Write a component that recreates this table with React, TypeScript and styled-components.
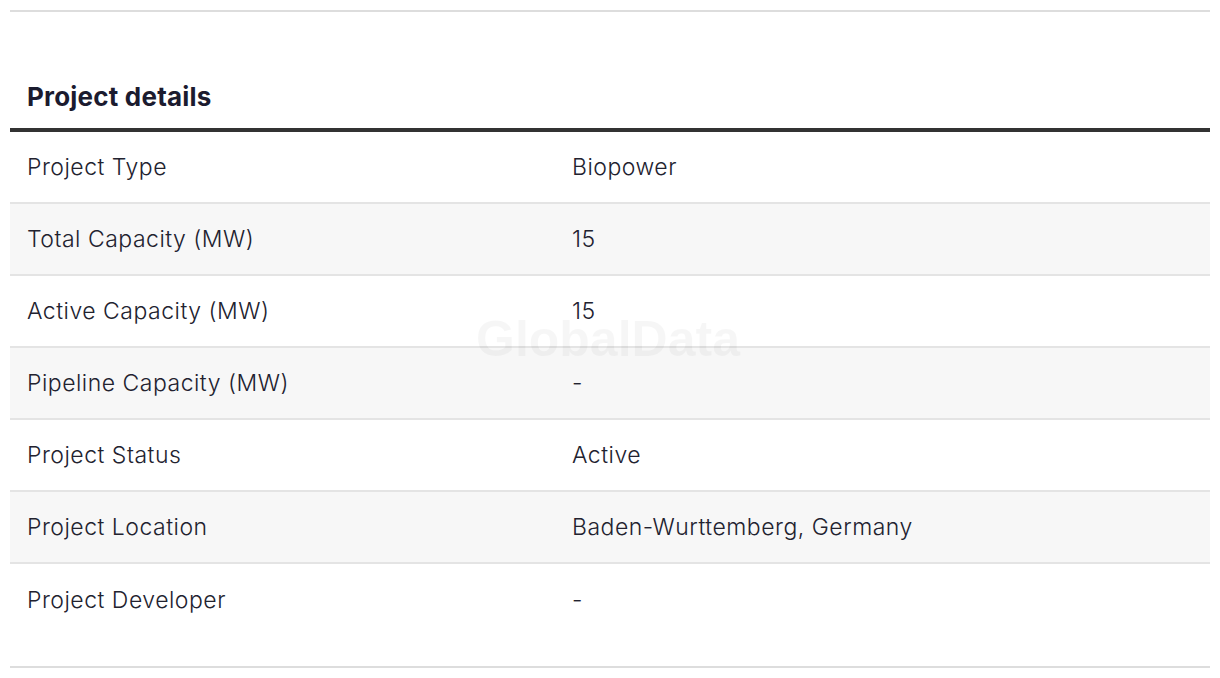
import React from "react";
import styled, { createGlobalStyle } from "styled-components";

const Global = createGlobalStyle`
  html, body { margin: 0; padding: 0; background: #fff; }
  body { font-family: Inter, "Noto Sans", "Liberation Sans", sans-serif; }
`;

const Page = styled.div`
  padding: 10px;
`;

const Rule = styled.div`
  height: 2px;
  background: #dddddd;
`;

const Heading = styled.h2`
  margin: 0;
  padding: 69px 17px 15px;
  font-size: 26px;
  line-height: 32px;
  font-weight: 700;
  color: #1b1b2f;
  border-bottom: 4px solid #333333;
  letter-spacing: 0.2px;
`;

const Table = styled.div`
  position: relative;
  display: flex;
  flex-direction: column;
`;

const Row = styled.div<{ $shaded: boolean; $last: boolean }>`
  display: grid;
  grid-template-columns: 545px 1fr;
  align-items: center;
  height: 72px;
  box-sizing: border-box;
  padding: 0 17px;
  background: ${(p) => (p.$shaded ? "#f7f7f7" : "#ffffff")};
  border-bottom: ${(p) => (p.$last ? "none" : "2px solid #e4e4e4")};
`;

const Cell = styled.div`
  font-size: 23px;
  line-height: 28px;
  font-weight: 350;
  letter-spacing: 0.5px;
  color: #22222f;
  padding-bottom: 1px;
`;

const Watermark = styled.div`
  position: absolute;
  left: 466px;
  top: 182px;
  font-family: "Liberation Sans", Arial, sans-serif;
  font-size: 50px;
  line-height: 50px;
  font-weight: 700;
  color: rgba(0, 0, 0, 0.035);
  pointer-events: none;
`;

const Spacer = styled.div`
  height: 30px;
`;

const rows: [string, string][] = [
  ["Project Type", "Biopower"],
  ["Total Capacity (MW)", "15"],
  ["Active Capacity (MW)", "15"],
  ["Pipeline Capacity (MW)", "-"],
  ["Project Status", "Active"],
  ["Project Location", "Baden-Wurttemberg, Germany"],
  ["Project Developer", "-"],
];

export default function App() {
  return (
    <Page>
      <Global />
      <Rule />
      <Heading>Project details</Heading>
      <Table>
        {rows.map(([k, v], i) => (
          <Row key={k} $shaded={i % 2 === 1} $last={i === rows.length - 1}>
            <Cell>{k}</Cell>
            <Cell>{v}</Cell>
          </Row>
        ))}
        <Watermark>GlobalData</Watermark>
      </Table>
      <Spacer />
      <Rule />
    </Page>
  );
}
